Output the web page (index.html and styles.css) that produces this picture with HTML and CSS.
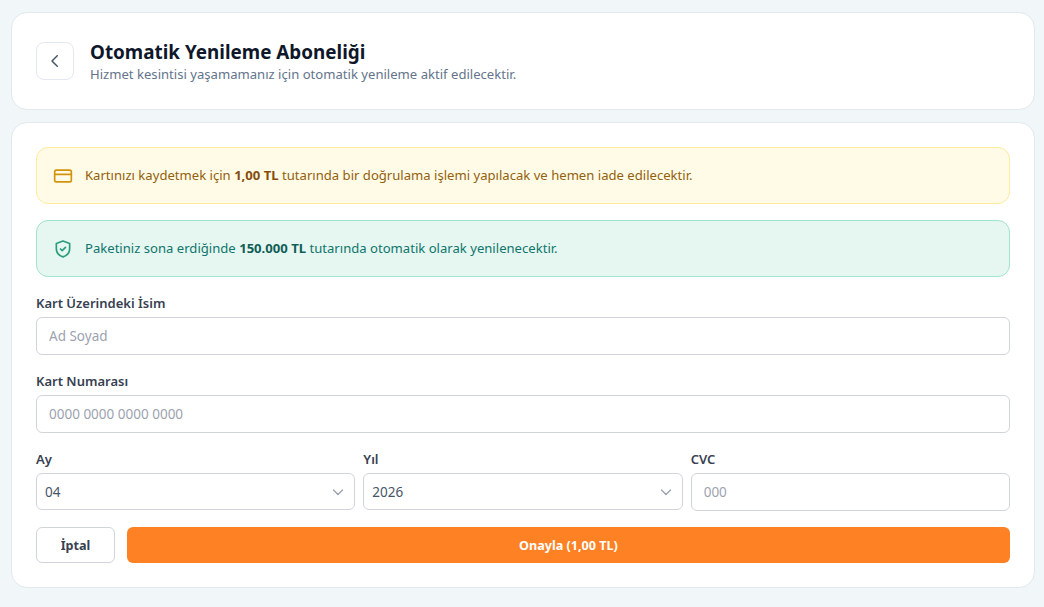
FILE: index.html
```html
<!DOCTYPE html>
<html lang="tr">
<head>
    <meta charset="UTF-8">
    <meta name="viewport" content="width=device-width, initial-scale=1.0">
    <title>Otomatik Yenileme Aboneliği</title>
    <link rel="stylesheet" href="styles.css">
</head>
<body>
    <div class="card header-card">
        <button class="back-btn" type="button" aria-label="Geri">
            <svg width="18" height="18" viewBox="0 0 24 24" fill="none" stroke="#475569" stroke-width="2" stroke-linecap="round" stroke-linejoin="round"><path d="M15 5l-7 7 7 7"/></svg>
        </button>
        <div>
            <h1>Otomatik Yenileme Aboneliği</h1>
            <p class="subtitle">Hizmet kesintisi yaşamamanız için otomatik yenileme aktif edilecektir.</p>
        </div>
    </div>

    <div class="card form-card">
        <div class="notice notice-warning">
            <svg width="20" height="20" viewBox="0 0 24 24" fill="none" stroke="#d4930d" stroke-width="2" stroke-linecap="round" stroke-linejoin="round"><rect x="2" y="5" width="20" height="14" rx="2"/><path d="M2 10h20"/></svg>
            <span>Kartınızı kaydetmek için <b>1,00 TL</b> tutarında bir doğrulama işlemi yapılacak ve hemen iade edilecektir.</span>
        </div>
        <div class="notice notice-success">
            <svg width="20" height="20" viewBox="0 0 24 24" fill="none" stroke="#2a9d7f" stroke-width="2" stroke-linecap="round" stroke-linejoin="round"><path d="M12 2.5l8 3v6c0 5-3.4 8.6-8 10-4.6-1.4-8-5-8-10v-6z"/><path d="M9 12l2 2 4-4"/></svg>
            <span>Paketiniz sona erdiğinde <b>150.000 TL</b> tutarında otomatik olarak yenilenecektir.</span>
        </div>

        <div class="field">
            <label for="name">Kart Üzerindeki İsim</label>
            <input id="name" type="text" placeholder="Ad Soyad">
        </div>
        <div class="field">
            <label for="number">Kart Numarası</label>
            <input id="number" type="text" placeholder="0000 0000 0000 0000">
        </div>

        <div class="field-row">
            <div class="field">
                <label for="month">Ay</label>
                <select id="month"><option>04</option></select>
            </div>
            <div class="field">
                <label for="year">Yıl</label>
                <select id="year"><option>2026</option></select>
            </div>
            <div class="field">
                <label for="cvc">CVC</label>
                <input id="cvc" type="text" placeholder="000">
            </div>
        </div>

        <div class="actions">
            <button class="btn btn-cancel" type="button">İptal</button>
            <button class="btn btn-submit" type="button">Onayla (1,00 TL)</button>
        </div>
    </div>
</body>
</html>
```

FILE: styles.css
```css
* {
    box-sizing: border-box;
}
body {
    margin: 0;
    padding: 12px 9px 12px 11px;
    background-color: #f1f6f9;
    font-family: "Noto Sans", sans-serif;
    color: #334155;
}
.card {
    background-color: #fff;
    border: 1px solid #e2e8ee;
    border-radius: 16px;
}
.header-card {
    display: flex;
    align-items: center;
    gap: 16px;
    height: 98px;
    padding: 0 24px;
    margin-bottom: 12px;
}
.back-btn {
    width: 38px;
    height: 38px;
    display: flex;
    align-items: center;
    justify-content: center;
    padding: 0;
    background: #fff;
    border: 1px solid #e2e8f0;
    border-radius: 8px;
}
h1 {
    margin: 0;
    font-size: 18.85px;
    line-height: 26px;
    font-weight: 700;
    color: #0f172a;
}
.subtitle {
    margin: 0;
    font-size: 13.1px;
    line-height: 18px;
    color: #64748b;
}
.form-card {
    padding: 24px;
    height: 466px;
}
.notice {
    display: flex;
    align-items: center;
    gap: 12px;
    height: 57px;
    padding: 0 16px;
    border: 1px solid;
    border-radius: 12px;
    font-size: 13.1px;
    margin-bottom: 16px;
}
.notice span {
    margin-bottom: 2px;
}
.notice b {
    font-weight: 700;
}
.notice-warning {
    background-color: #fffbe6;
    border-color: #fdeb9e;
    color: #92610e;
}
.notice-warning b {
    color: #854d0e;
}
.notice-success {
    background-color: #e6f6f0;
    border-color: #a0e4cb;
    color: #0f766e;
}
.notice-success b {
    color: #115e59;
}
.field {
    margin-bottom: 16px;
}
label {
    display: block;
    font-size: 13px;
    line-height: 20px;
    font-weight: 600;
    color: #374151;
    margin-bottom: 4px;
}
input, select {
    display: block;
    width: 100%;
    height: 38px;
    padding: 0 12px;
    font-family: inherit;
    font-size: 13.5px;
    color: #475569;
    background-color: #fff;
    border: 1px solid #d1d5db;
    border-radius: 6px;
    outline: none;
}
input::placeholder {
    color: #9ca3af;
}
select {
    appearance: none;
    height: 37px;
    padding: 0 8px;
    background-image: url("data:image/svg+xml,%3Csvg xmlns='http://www.w3.org/2000/svg' width='16' height='16' viewBox='0 0 16 16' fill='none' stroke='%239ca3af' stroke-width='1.4' stroke-linecap='round' stroke-linejoin='round'%3E%3Cpath d='M3.5 6l4.5 4.5 4.5-4.5'/%3E%3C/svg%3E");
    background-repeat: no-repeat;
    background-position: right 8px center;
}
.field-row {
    display: grid;
    grid-template-columns: 1fr 1fr 1fr;
    gap: 8px;
}
.actions {
    display: flex;
    gap: 12px;
}
.btn {
    height: 36px;
    font-family: inherit;
    font-size: 12.6px;
    font-weight: 700;
    border-radius: 6px;
}
.btn-cancel {
    width: 79px;
    background-color: #fff;
    border: 1px solid #d1d5db;
    color: #374151;
}
.btn-submit {
    flex: 1;
    background-color: #fe8224;
    border: none;
    color: #fff;
}
```
